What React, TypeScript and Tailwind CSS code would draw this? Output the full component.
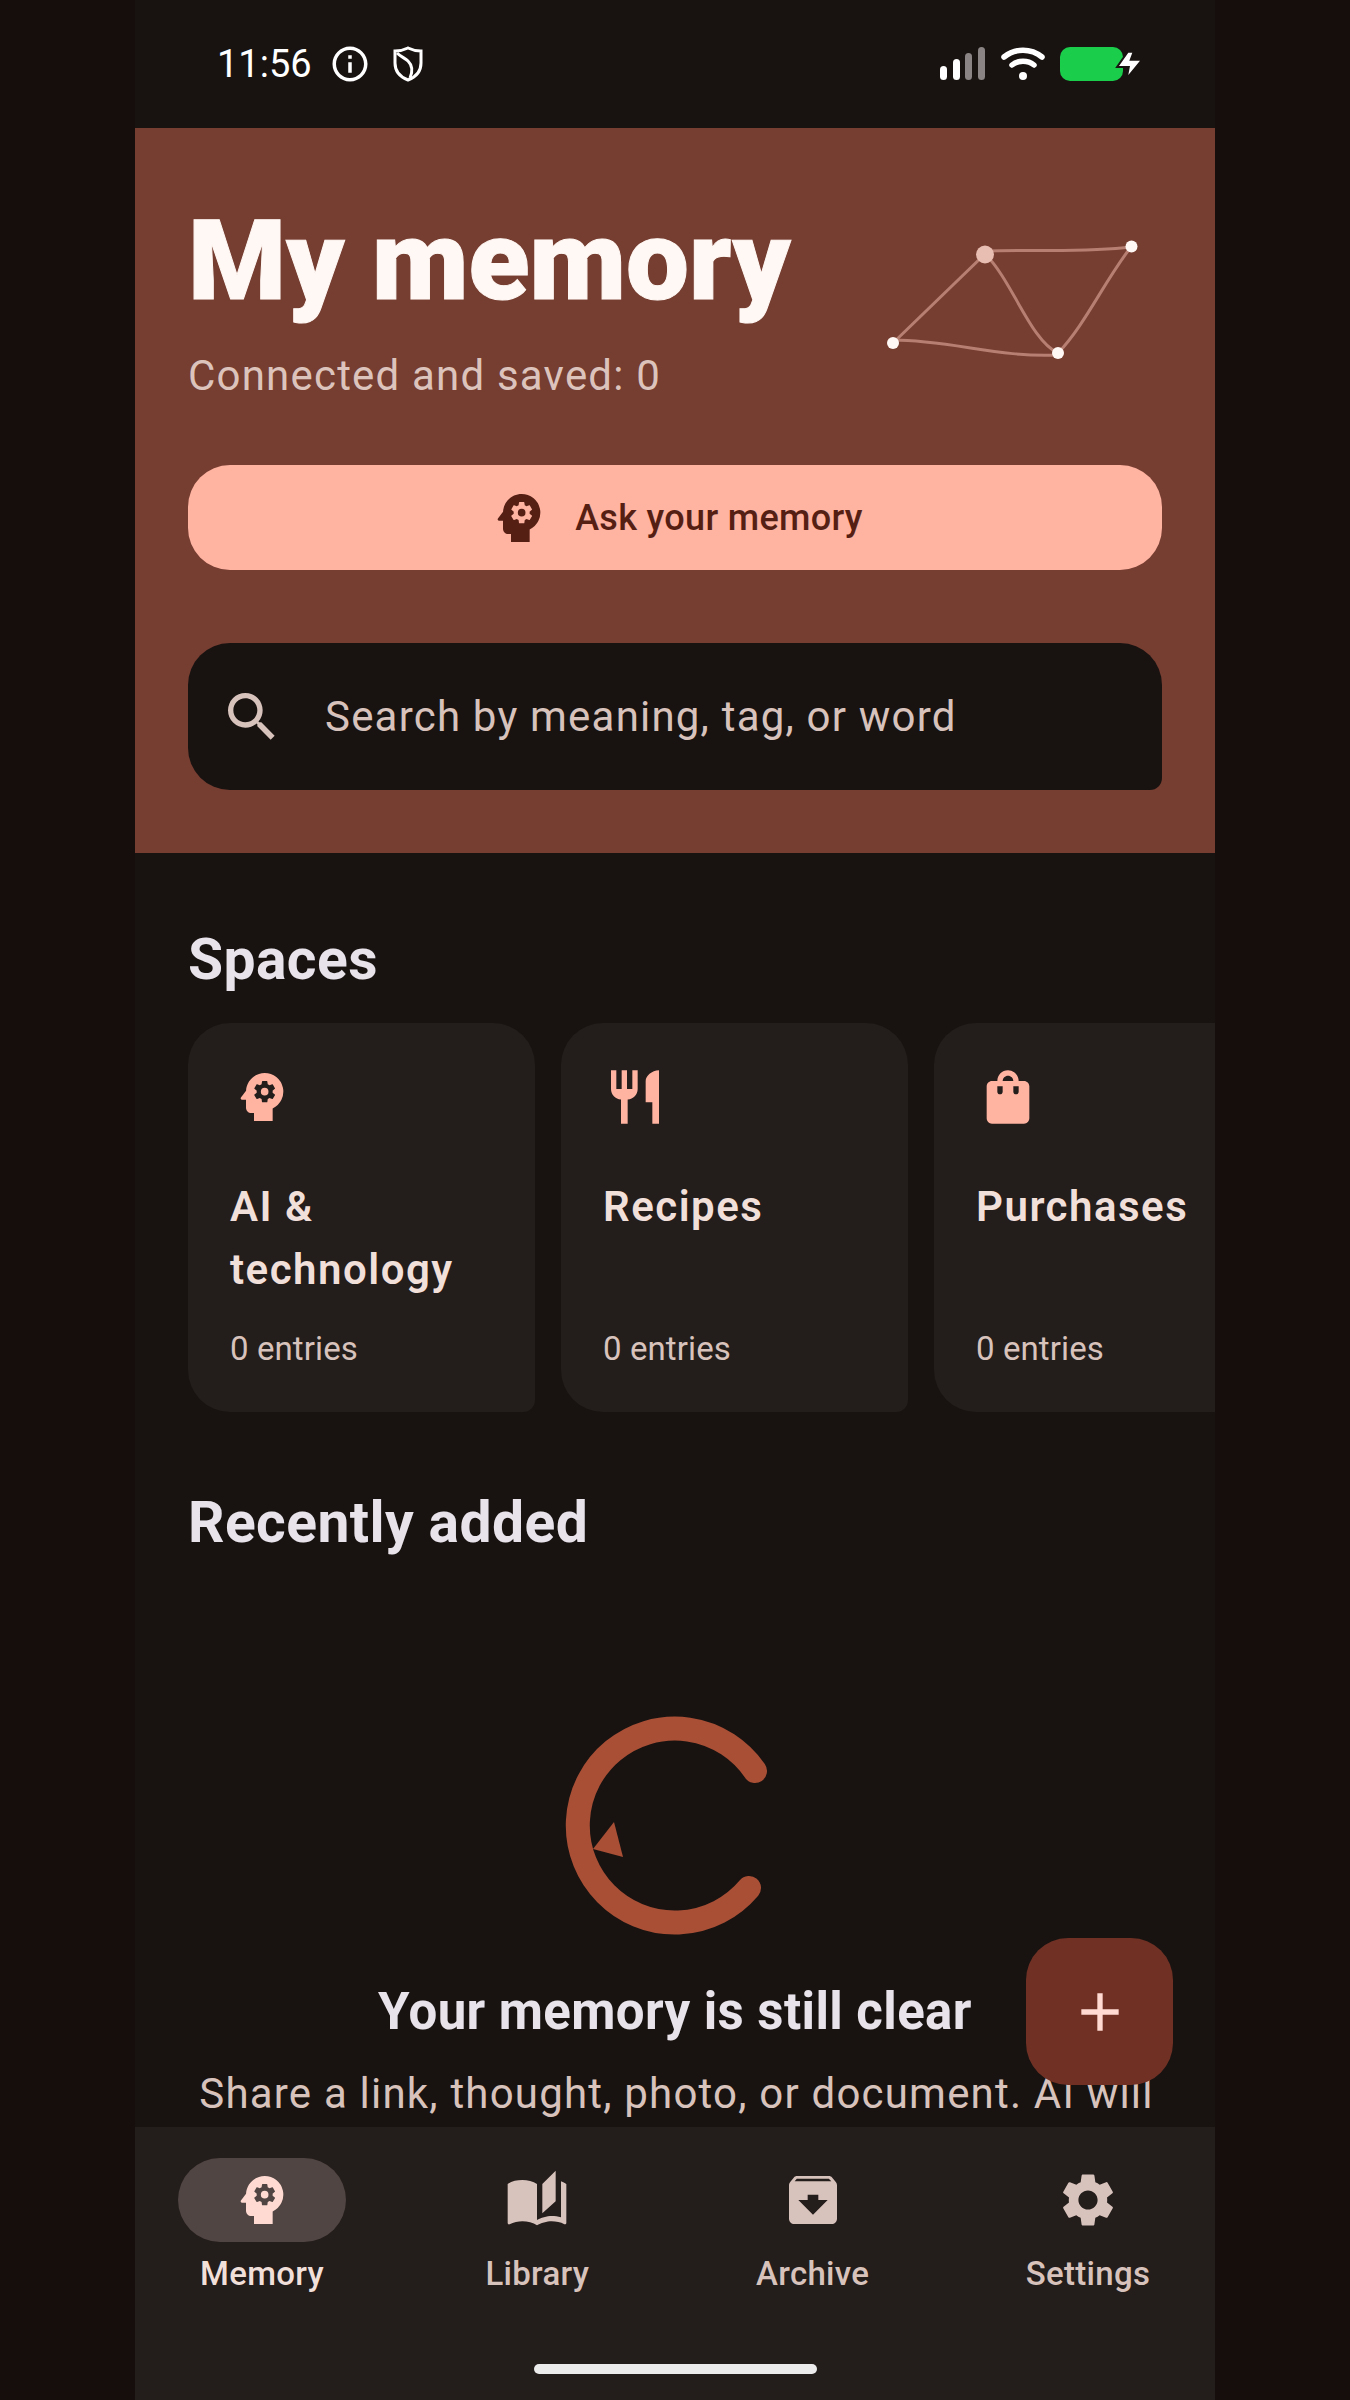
import {
  MdAdd,
  MdArchive,
  MdAutoStories,
  MdInfoOutline,
  MdPsychology,
  MdRestaurant,
  MdSearch,
  MdSettings,
  MdShoppingBag,
} from 'react-icons/md';

function StatusBar() {
  return (
    <div className="h-[128px] shrink-0 flex items-center justify-between pl-[82px] pr-[75px] text-white">
      <div className="flex items-center">
        <span className="text-[38px] leading-[44px] w-[113px]">11:56</span>
        <MdInfoOutline size={42} className="-ml-[1px]" />
        <svg width="30" height="36" viewBox="0 0 30 36" className="ml-[22px]" fill="none" stroke="white" strokeWidth="3">
          <path d="M15 2 C19 4 24 5 28 5 V17 C28 25 23 31 15 34 C7 31 2 25 2 17 V5 C6 5 11 4 15 2 Z" />
          <path d="M4 7 C8 11 12 12 15 15 C19 19 20 25 17 32" />
        </svg>
      </div>
      <div className="flex items-center">
        <svg width="46" height="34" viewBox="0 0 46 34">
          <rect x="0" y="19" width="7" height="14" rx="3.5" fill="white" />
          <rect x="13" y="12" width="7" height="21" rx="3.5" fill="white" />
          <rect x="25" y="6" width="7" height="27" rx="3.5" fill="#8a8584" />
          <rect x="38" y="0" width="7" height="33" rx="3.5" fill="#8a8584" />
        </svg>
        <svg width="44" height="34" viewBox="0 0 44 34" className="ml-[15px]" fill="none" stroke="white" strokeLinecap="round" strokeWidth="5.5">
          <path d="M3 10 C14 1 30 1 41 10" />
          <path d="M11 18 C17 13 27 13 33 18" />
          <circle cx="22" cy="29" r="4" fill="white" stroke="none" />
        </svg>
        <svg width="80" height="36" viewBox="0 0 80 36" className="ml-[15px]">
          <rect x="0" y="1" width="63" height="34" rx="10" fill="#1ace4c" />
          <path d="M68.3 6.7 H72.3 L69.3 14.7 H80 L68.3 29 L70 20 H59 Z" fill="#181311" stroke="#181311" strokeWidth="4" />
          <path d="M68.3 6.7 H72.3 L69.3 14.7 H80 L68.3 29 L70 20 H59 Z" fill="white" />
        </svg>
      </div>
    </div>
  );
}

function Graph() {
  return (
    <svg width="290" height="170" viewBox="872 195 290 170" fill="none" className="shrink-0">
      <g stroke="#b67f72" strokeWidth="3">
        <path d="M893 343 L985 254" />
        <path d="M985 251 C1030 249 1085 253 1131 247" />
        <path d="M985 254 C1012 280 1030 340 1058 353" />
        <path d="M1058 353 C1085 325 1105 280 1131 247" />
        <path d="M893 340 C950 340 1000 358 1058 355" />
      </g>
      <circle cx="985" cy="254.5" r="9" fill="#e8bdb2" />
      <circle cx="893" cy="343" r="6" fill="#fff8f4" />
      <circle cx="1131.5" cy="246.5" r="6" fill="#fff8f4" />
      <circle cx="1058" cy="353" r="6" fill="#fff8f4" />
    </svg>
  );
}

function Header() {
  return (
    <section className="shrink-0 bg-[#763d31] px-[53px] pt-[67px] pb-[63px]">
      <div className="flex justify-between items-start">
        <div>
          <h1 className="text-[112px] leading-[132px] font-black [-webkit-text-stroke:1px_#fff8f4] text-[#fff8f4] whitespace-nowrap">My memory</h1>
          <p className="mt-[21px] text-[42px] leading-[56px] tracking-[1.2px] text-[#dcc4bd]">Connected and saved: 0</p>
        </div>
        <Graph />
      </div>
      <button className="mt-[61px] w-full h-[105px] rounded-[42px] bg-[#ffb3a1] text-[#561f14] flex items-center justify-center gap-[24px]">
        <MdPsychology size={64} />
        <span className="text-[36px] font-medium tracking-[0.33px]">Ask your memory</span>
      </button>
      <div className="mt-[73px] h-[147px] bg-[#181311] rounded-tl-[42px] rounded-tr-[42px] rounded-bl-[42px] rounded-br-[12px] flex items-center pl-[32px] text-[#d8c2bc]">
        <MdSearch size={64} />
        <span className="ml-[41px] text-[42px] tracking-[1.2px]">Search by meaning, tag, or word</span>
      </div>
    </section>
  );
}

const spaces = [
  { name: 'AI & technology', Icon: MdPsychology },
  { name: 'Recipes', Icon: MdRestaurant },
  { name: 'Purchases', Icon: MdShoppingBag },
];

function Spaces() {
  return (
    <section className="pl-[53px] pt-[73px]">
      <h2 className="text-[57px] leading-[68px] font-bold tracking-[0.4px] text-[#e8e3ea]">Spaces</h2>
      <div className="mt-[29px] flex gap-[26px]">
        {spaces.map(({ name, Icon }) => (
          <div key={name} className="w-[347px] shrink-0 pt-[42px] px-[42px] pb-[41px] bg-[#231d1b] rounded-tl-[42px] rounded-tr-[42px] rounded-bl-[42px] rounded-br-[12px] text-[#f1dfda]">
            <Icon size={64} className="text-[#ffb3a1]" />
            <h3 className="mt-[46px] h-[126px] text-[42px] leading-[63px] font-semibold tracking-[1.5px]">{name}</h3>
            <p className="mt-[26px] text-[33px] leading-[44px] tracking-[0.1px] text-[#d8c2bc]">0 entries</p>
          </div>
        ))}
      </div>
    </section>
  );
}

function EmptyState() {
  return (
    <div className="flex flex-col items-center px-[53px]">
      <svg width="240" height="240" viewBox="555 1705 240 240" fill="none" className="mt-[149px]">
        <path d="M755 1770 A97 97 0 1 0 749 1887" stroke="#a84f36" strokeWidth="24" strokeLinecap="round" />
        <path d="M614 1821 L593 1848 L623 1856 Z" fill="#a84f36" />
      </svg>
      <h3 className="mt-[34px] text-[51px] leading-[64px] font-bold tracking-[0.4px] text-[#e8e3ea] whitespace-nowrap">Your memory is still clear</h3>
      <p className="mt-[18px] pl-[3px] text-[42px] leading-[63px] tracking-[1.2px] text-[#d8c2bc] text-center whitespace-nowrap">Share a link, thought, photo, or document. AI will</p>
    </div>
  );
}

const tabs = [
  { label: 'Memory', Icon: MdPsychology, active: true },
  { label: 'Library', Icon: MdAutoStories, active: false },
  { label: 'Archive', Icon: MdArchive, active: false },
  { label: 'Settings', Icon: MdSettings, active: false },
];

function BottomNav() {
  return (
    <nav className="h-[273px] shrink-0 bg-[#231d1b] pt-[31px] flex flex-col">
      <div className="flex justify-between px-[43px]">
        {tabs.map(({ label, Icon, active }) => (
          <div key={label} className="w-[168px] flex flex-col items-center">
            <div className={active ? 'w-[168px] h-[84px] rounded-[42px] bg-[#504542] text-[#ffdad2] flex items-center justify-center' : 'w-[168px] h-[84px] text-[#d8c2bc] flex items-center justify-center'}>
              <Icon size={64} />
            </div>
            <span className={active ? 'mt-[8px] text-[33px] leading-[48px] font-medium tracking-[0.3px] text-[#f1dfda] whitespace-nowrap' : 'mt-[8px] text-[33px] leading-[48px] font-medium tracking-[0.3px] text-[#d8c2bc] whitespace-nowrap'}>{label}</span>
          </div>
        ))}
      </div>
      <div className="mt-[66px] mx-auto w-[283px] h-[10px] rounded-[5px] bg-[#ececec]" />
    </nav>
  );
}

export default function App() {
  return (
    <div className="min-h-[2400px] flex justify-center bg-[#160e0d] [font-family:Roboto,sans-serif]">
      <div className="relative w-[1080px] h-[2400px] flex flex-col overflow-hidden bg-[#181311]">
        <StatusBar />
        <main className="flex-1 min-h-0 overflow-hidden flex flex-col">
          <Header />
          <Spaces />
          <h2 className="pl-[53px] mt-[77px] text-[57px] leading-[68px] font-bold tracking-[0.4px] text-[#e8e3ea]">Recently added</h2>
          <EmptyState />
        </main>
        <BottomNav />
        <button className="absolute left-[891px] top-[1938px] w-[147px] h-[147px] rounded-[42px] bg-[#703124] text-[#ffdad2] flex items-center justify-center">
          <MdAdd size={64} />
        </button>
      </div>
    </div>
  );
}
